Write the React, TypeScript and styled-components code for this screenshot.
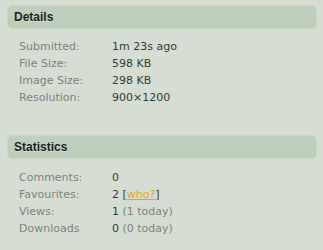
import styled, { createGlobalStyle } from "styled-components";

const GlobalStyle = createGlobalStyle`
  html, body {
    margin: 0;
    padding: 0;
    background: #d6ded3;
  }
`;

const Page = styled.div`
  width: 323px;
  height: 250px;
  padding-top: 5px;
  box-sizing: border-box;
  font-family: "DejaVu Sans", Verdana, sans-serif;
  font-size: 11px;
`;

const Section = styled.section<{ $gap: number }>`
  margin-bottom: ${(p) => p.$gap}px;
`;

const Bar = styled.h2`
  margin: 0 6px 0 7px;
  height: 24px;
  box-sizing: border-box;
  padding-left: 6px;
  display: flex;
  align-items: center;
  border-radius: 5px;
  background: linear-gradient(#bfd1bd, #bccdb9);
  border: 1px solid #c9d7c6;
  font-family: "Liberation Sans", Arial, sans-serif;
  font-size: 12px;
  font-weight: 700;
  color: #1b1f1b;
  text-shadow: 0 1px 0 rgba(255, 255, 255, 0.35);
`;

const Table = styled.div<{ $top: number }>`
  display: grid;
  grid-template-columns: 93px auto;
  padding: ${(p) => p.$top}px 0 0 19px;
  line-height: 17px;
`;

const Label = styled.span`
  color: #7b8079;
`;

const Value = styled.span`
  color: #353835;
`;

const Note = styled.span`
  color: #7b8079;
`;

const Who = styled.a`
  color: #e8a317;
  text-decoration: underline;
`;

const App = () => {
  return (
    <>
      <GlobalStyle />
      <Page>
        <Section $gap={29}>
          <Bar>Details</Bar>
          <Table $top={9}>
            <Label>Submitted:</Label>
            <Value>1m 23s ago</Value>
            <Label>File Size:</Label>
            <Value>598 KB</Value>
            <Label>Image Size:</Label>
            <Value>298 KB</Value>
            <Label>Resolution:</Label>
            <Value>900×1200</Value>
          </Table>
        </Section>
        <Section $gap={0}>
          <Bar>Statistics</Bar>
          <Table $top={10}>
            <Label>Comments:</Label>
            <Value>0</Value>
            <Label>Favourites:</Label>
            <Value>
              2 [<Who href="#">who?</Who>]
            </Value>
            <Label>Views:</Label>
            <Value>
              1 <Note>(1 today)</Note>
            </Value>
            <Label>Downloads</Label>
            <Value>
              0 <Note>(0 today)</Note>
            </Value>
          </Table>
        </Section>
      </Page>
    </>
  );
};

export default App;
